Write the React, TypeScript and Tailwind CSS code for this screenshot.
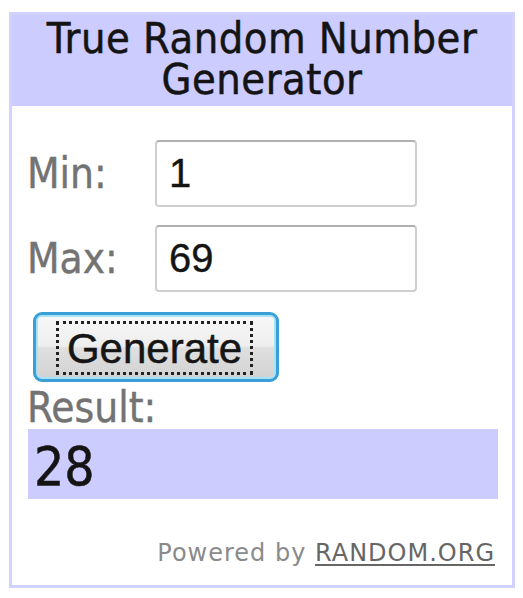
export default function App() {
	return (
		<div className="w-[523px] h-[598px] bg-white pt-[12px] pl-[9px]">
			<div className="w-[506px] h-[576px] border-[3px] border-[#d2d2ff] flex flex-col font-['DejaVu_Sans_Condensed','DejaVu_Sans',sans-serif]">
				<div className="h-[91px] bg-[#ccccff] pt-[3px] text-center text-[43px] leading-[41px] tracking-[0.5px] text-[#141414] [-webkit-text-stroke:0.5px_currentColor]">
					<div className="h-[41px]">True Random Number</div>
					<div className="h-[41px]">Generator</div>
				</div>
				<div className="flex flex-col pl-[15px] pr-[17px]">
					<Field label="Min:" value="1" className="mt-[34px]" />
					<Field label="Max:" value="69" className="mt-[18px]" />
					<GenerateButton />
					<div className="mt-[7px] text-[42px] leading-[38px] text-[#737373] [-webkit-text-stroke:0.4px_currentColor]">Result:</div>
					<div className="mt-[2px] ml-[1px] w-[470px] h-[70px] bg-[#ccccff] pt-[7px] pl-[6px] text-[53px] leading-[62px] text-[#141414] [-webkit-text-stroke:0.5px_currentColor]">
						28
					</div>
					<div className="mt-[42px] text-right text-[24px] leading-[24px] tracking-[1px] text-[#8a8a8a] font-['DejaVu_Sans',sans-serif]">
						Powered by{' '}
						<a href="#" className="text-[#666] underline decoration-2 underline-offset-[3px]">
							RANDOM.ORG
						</a>
					</div>
				</div>
			</div>
		</div>
	);
}

const Field = ({ label, value, className }: { label: string; value: string; className?: string }) => {
	return (
		<div className={`flex items-center ${className ?? ''}`}>
			<label className="w-[128px] text-[42px] leading-[42px] text-[#737373] [-webkit-text-stroke:0.4px_currentColor]">{label}</label>
			<input
				readOnly
				value={value}
				className="w-[262px] h-[67px] rounded-[4px] border-2 border-[#cfcfcf] border-t-[#b0b0b0] bg-white pl-[12px] text-[40px] text-[#141414] font-['Liberation_Sans',Arial,sans-serif] outline-none [-webkit-text-stroke:0.4px_currentColor]"
			/>
		</div>
	);
};

const GenerateButton = () => {
	return (
		<button className="mt-[20px] ml-[6px] w-[246px] h-[70px] rounded-[9px] border-[3px] border-[#3a9fd6] shadow-[inset_0_0_0_2px_#a6e3f7] bg-[linear-gradient(#f8f8f8,#eeeeee_48%,#dfdfdf_52%,#d2d2d2)] flex items-center pl-[20px]">
			<span className="w-[197px] h-[54px] mt-[2px] border-[3px] border-dotted border-[#222] flex items-center justify-center text-[42px] text-[#151515] font-['Liberation_Sans',Arial,sans-serif] [-webkit-text-stroke:0.5px_currentColor]">
				Generate
			</span>
		</button>
	);
};
